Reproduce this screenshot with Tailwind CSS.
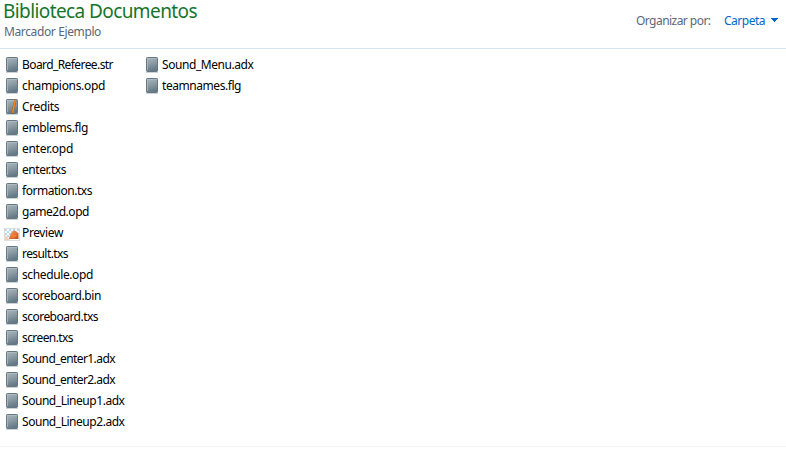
<!DOCTYPE html>
<html lang="es">
<head>
<meta charset="utf-8">
<title>Biblioteca Documentos</title>
<script src="https://cdn.jsdelivr.net/npm/@tailwindcss/browser@4"></script>
</head>
<body class="bg-white">
<svg class="absolute h-0 w-0">
  <defs>
    <linearGradient id="g" x1="0" y1="0" x2="0.25" y2="1"><stop offset="0" stop-color="#abb8bf"/><stop offset=".5" stop-color="#8c9ba4"/><stop offset="1" stop-color="#647a86"/></linearGradient>
    <linearGradient id="fire" x1="0" y1="0" x2="1" y2="1"><stop offset="0" stop-color="#f5a868"/><stop offset=".5" stop-color="#e67438"/><stop offset="1" stop-color="#b9501f"/></linearGradient>
    <symbol id="file" viewBox="0 0 16 16"><path d="M2 15.5h12" stroke="#ccd3d7"/><rect x="2.5" y=".5" width="11" height="14" rx=".8" fill="url(#g)" stroke="#657782"/><path d="M3.5 13V1.5h9" fill="none" stroke="#b4c0c6" stroke-width=".7"/></symbol>
    <symbol id="note" viewBox="0 0 16 16"><use href="#file"/><path d="M11.6 1 9.8 7.5 8.6 14.6" fill="none" stroke="#7c5530" stroke-width="2.2"/><path d="M11.5.8 9.8 7.5 8.7 14" fill="none" stroke="#f28a1c" stroke-width="1.6"/></symbol>
    <symbol id="image" viewBox="0 0 16 16"><rect x=".5" y="3.5" width="15" height="12" fill="#fff" stroke="#dddfe1"/><path d="M1 4h2v2H1zM5 4h2v2H5zM9 4h2v2H9zM3 6h2v2H3zM7 6h2v2H7zM1 8h2v2H1zM5 8h2v2H5zM3 10h2v2H3zM13 4h2v2h-2z" fill="#b5d9ef"/><path d="m1 10 5 5H1z" fill="#f4cdb8"/><path d="M5 14 5.5 11.5 7 8.5 9.5 5.5 12 6 14.5 8.5V14Z" fill="url(#fire)"/><path d="m8 10 2-2 1 2 2 0-2 2-3 1z" fill="#f17c3b"/></symbol>
  </defs>
</svg>
<div class="flex h-[449px] w-[786px] flex-col overflow-hidden font-['Noto_Sans','Open_Sans',sans-serif] text-[12px]">
  <header class="flex h-[49px] shrink-0 justify-between border-b border-[#d5e5f7]">
    <div class="pl-[3px]">
      <h1 class="h-[23px] text-[19px] leading-[23px] whitespace-nowrap text-[#16752a]"><span class="block w-fit" data-w="194">Biblioteca Documentos</span></h1>
      <p class="pl-px leading-[18px] whitespace-nowrap text-[#5a6779]"><span data-w="97">Marcador Ejemplo</span></p>
    </div>
    <div class="flex h-[41px] items-center pr-[8px] whitespace-nowrap">
      <div class="w-[88px] text-[#5a6779]"><span data-w="74.5">Organizar por:</span></div>
      <div class="w-[47px] text-[#0066cc]"><span data-w="41">Carpeta</span></div>
      <svg class="mb-px h-[4px] w-[7px]" viewBox="0 0 7 4" shape-rendering="crispEdges"><path d="M0 0h7v1H6v1H5v1H4v1H3V3H2V2H1V1H0z" fill="#0066cc"/></svg>
    </div>
  </header>
  <main id="files" class="flex h-[397px] shrink-0 gap-[21px] pt-[5px] pl-1"></main>
  <footer class="border-t border-[#f3f3f3]"></footer>
</div>
<script>
const columns = [
  [["Board_Referee.str",91],["champions.opd",83],["Credits",37,"note"],["emblems.flg",66],["enter.opd",51],["enter.txs",44],["formation.txs",70],["game2d.opd",67],["Preview",41,"image"],["result.txs",46],["schedule.opd",71],["scoreboard.bin",79],["scoreboard.txs",76],["screen.txs",51],["Sound_enter1.adx",93],["Sound_enter2.adx",93],["Sound_Lineup1.adx",102.5],["Sound_Lineup2.adx",102.5]],
  [["Sound_Menu.adx",91.5],["teamnames.flg",79]]
];
document.getElementById("files").innerHTML = columns.map(c => `<ul class="w-[119px]">${c.map(([name, w, icon]) => `<li class="flex h-[21px] items-start gap-[2px] pt-[3px] text-black"><svg class="h-4 w-4 shrink-0"><use href="#${icon || "file"}"/></svg><span class="leading-[15px] whitespace-nowrap" data-w="${w}">${name}</span></li>`).join("")}</ul>`).join("");
function fit() {
  document.querySelectorAll("[data-w]").forEach(s => {
    s.style.letterSpacing = "0px";
    s.style.letterSpacing = (s.dataset.w - s.getBoundingClientRect().width) / s.textContent.length + "px";
  });
}
window.addEventListener("load", () => document.fonts.ready.then(fit));
</script>
</body>
</html>
